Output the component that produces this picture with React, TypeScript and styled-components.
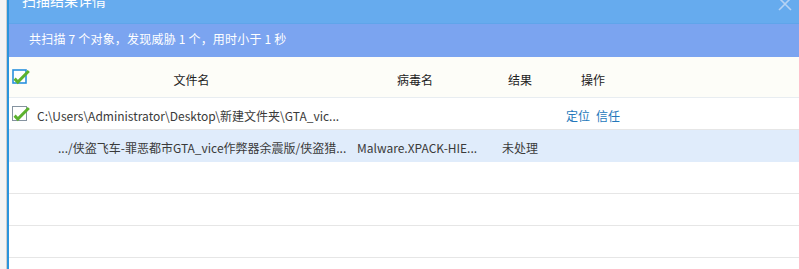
import styled, { createGlobalStyle } from "styled-components";

const GlobalStyle = createGlobalStyle`
  html, body {
    margin: 0;
    padding: 0;
    background: #ffffff;
    overflow: hidden;
  }
  body {
    font-family: "Noto Sans CJK SC", "Noto Sans", sans-serif;
    font-size: 12px;
    color: #333333;
  }
`;

const Page = styled.div`
  display: flex;
  width: 799px;
  height: 269px;
  overflow: hidden;
`;

const SideStrip = styled.div`
  width: 6px;
  flex-shrink: 0;
  background-color: #f4f4f4;
  border-right: 1px solid #cdcdcd;
`;

const Dialog = styled.div`
  flex: 1;
  display: flex;
  flex-direction: column;
  border-left: 2px solid #2a94dc;
  min-width: 0;

  & > * {
    flex-shrink: 0;
  }
`;

const TitleBar = styled.div`
  height: 41px;
  margin-top: -17px;
  display: flex;
  align-items: center;
  justify-content: space-between;
  padding: 0 6px 7px 13px;
  box-sizing: border-box;
  background-color: #66abee;
  border-bottom: 1px solid #5fa5ea;
  color: #ffffff;
  font-size: 14px;
`;

const CloseBtn = styled.button`
  width: 16px;
  height: 16px;
  padding: 0;
  border: none;
  background: none;
  display: flex;
  align-items: center;
  justify-content: center;
  margin-top: 8px;
`;

const Summary = styled.div`
  height: 33px;
  box-sizing: border-box;
  display: flex;
  align-items: center;
  padding: 0 0 4px 20px;
  background-color: #7ba4f0;
  color: #ffffff;
  font-size: 12px;
  letter-spacing: 0.2px;
  white-space: pre;
`;

const Table = styled.div`
  display: flex;
  flex-direction: column;
`;

const Row = styled.div<{ header?: boolean; selected?: boolean }>`
  flex-shrink: 0;
  display: grid;
  grid-template-columns: 24px 317px 130px 80px 66px 1fr;
  align-items: center;
  height: ${(props) => (props.header ? "40px" : "31px")};
  background-color: ${(props) =>
    props.header ? "#fdfdf8" : props.selected ? "#e0ecfb" : "#ffffff"};
  border-bottom: 1px solid
    ${(props) =>
      props.header ? "#e8edf1" : props.selected ? "#e0ecfb" : "#e6e6e6"};
`;

const HeadCell = styled.div`
  text-align: center;
  color: #222222;
  padding-top: 4px;
`;

const Cell = styled.div<{ align?: string; indent?: number }>`
  text-align: ${(props) => props.align || "left"};
  padding-left: ${(props) => props.indent || 0}px;
  padding-top: 4px;
  white-space: nowrap;
  overflow: hidden;
  color: #3a3a3a;
`;

const CheckCell = styled.div`
  display: flex;
  align-items: center;
  padding-left: 3px;
`;

const LinkBtn = styled.a`
  color: #2478bb;
  text-decoration: none;
  cursor: pointer;

  & + & {
    margin-left: 6px;
  }
`;

const CheckBox = ({ active }: { active?: boolean }) => (
  <svg width="20" height="16" viewBox="0 0 20 16">
    <rect
      x={active ? 1 : 0.5}
      y={active ? 1 : 0.5}
      width={active ? 13 : 14}
      height={active ? 13 : 14}
      fill="#ffffff"
      stroke={active ? "#2891de" : "#8593a0"}
      strokeWidth={active ? 1.6 : 1}
    />
    <path
      d="M2.6 9.6 L5.8 13 L16.8 2"
      fill="none"
      stroke="#5cb22e"
      strokeWidth="3"
    />
  </svg>
);

const EMPTY_ROWS = [0, 1, 2, 3];

const App = () => {
  return (
    <Page>
      <GlobalStyle />
      <SideStrip />
      <Dialog>
        <TitleBar>
          扫描结果详情
          <CloseBtn>
            <svg width="14" height="14" viewBox="0 0 14 14">
              <path
                d="M1 1 L13 13 M13 1 L1 13"
                stroke="#b5d2f4"
                strokeWidth="1.6"
              />
            </svg>
          </CloseBtn>
        </TitleBar>
        <Summary>共扫描 7 个对象，发现威胁 1 个，用时小于 1 秒</Summary>
        <Table>
          <Row header>
            <CheckCell>
              <CheckBox active />
            </CheckCell>
            <HeadCell>文件名</HeadCell>
            <HeadCell>病毒名</HeadCell>
            <HeadCell>结果</HeadCell>
            <HeadCell>操作</HeadCell>
            <div />
          </Row>
          <Row>
            <CheckCell>
              <CheckBox />
            </CheckCell>
            <Cell indent={4}>C:\Users\Administrator\Desktop\新建文件夹\GTA_vic...</Cell>
            <Cell />
            <Cell />
            <Cell align="center">
              <LinkBtn>定位</LinkBtn>
              <LinkBtn>信任</LinkBtn>
            </Cell>
            <div />
          </Row>
          <Row selected>
            <div />
            <Cell indent={25}>.../侠盗飞车-罪恶都市GTA_vice作弊器余震版/侠盗猎...</Cell>
            <Cell indent={7}>Malware.XPACK-HIE...</Cell>
            <Cell align="center">未处理</Cell>
            <Cell />
            <div />
          </Row>
          {EMPTY_ROWS.map((idx) => (
            <Row key={idx}>
              <div />
            </Row>
          ))}
        </Table>
      </Dialog>
    </Page>
  );
};

export default App;
